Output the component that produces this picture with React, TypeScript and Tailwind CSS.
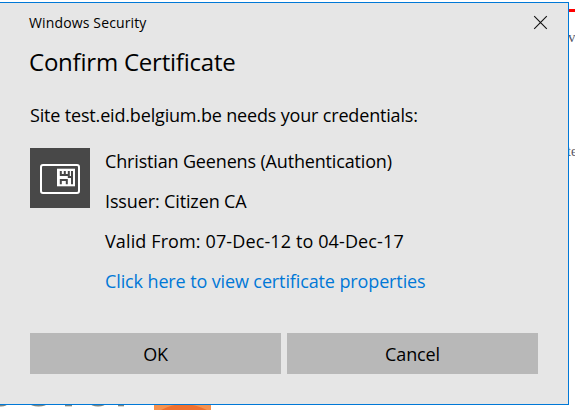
import React from 'react';

function SmartCardIcon() {
  return (
    <svg width="60" height="60" viewBox="0 0 60 60" fill="none">
      <rect x="11" y="17" width="38" height="28" rx="2" stroke="#fff" strokeWidth="2" />
      <rect x="27" y="20.7" width="18" height="17.6" fill="#fff" />
      <path
        d="M30.8 23V27H38.8V23M34.8 23V27M30.8 36.2V32H36.8V36.2M42 23V36.2M38.8 26V29H42"
        stroke="#484848"
        strokeWidth="2"
      />
    </svg>
  );
}

function BackgroundPage() {
  return (
    <div className="flex h-[410px] w-[575px] flex-col justify-between bg-white">
      <div className="flex flex-col items-end">
        <div className="mt-[9px] h-[3px] w-full bg-[#ff0000]" />
        <div className="mt-[16px] w-[7px] font-['Liberation_Serif',serif] text-[15px] leading-[18px] text-[#555566]">v</div>
        <div className="mt-[97px] w-[8px] font-['Liberation_Serif',serif] text-[14px] leading-[18px] text-[#555566]">te</div>
      </div>
      <svg className="h-[8px] w-[240px]" viewBox="0 402 240 8">
        <g fill="#7b8582">
          <ellipse cx="1" cy="403" rx="7" ry="3.6" />
          <ellipse cx="38.5" cy="403" rx="9" ry="3.6" />
          <rect x="65" y="402" width="7" height="4.3" />
          <ellipse cx="98" cy="403" rx="8" ry="3.6" />
          <rect x="118" y="402" width="6" height="4.3" />
        </g>
        <rect x="154" y="402" width="57" height="8" fill="#f6924e" />
        <path d="M161 410Q183 398 207 410Z" fill="#ef702f" />
      </svg>
    </div>
  );
}

function DialogButton({ label }: { label: string }) {
  return (
    <button className="flex h-[41px] flex-1 items-center justify-center bg-[#b8b8b8] pt-[2px] text-[18px] tracking-[-0.15px]">
      {label}
    </button>
  );
}

export default function App() {
  return (
    <div className="relative h-[410px] w-[575px] overflow-hidden">
      <BackgroundPage />
      <section className="absolute top-[2px] left-0 flex h-[403px] w-[569px] flex-col border-t border-r border-b border-[#0078d7] bg-[#e6e6e6] pr-[30px] pl-[30px] font-['Open_Sans','Noto_Sans',sans-serif] text-black">
        <header className="-mr-[10px] -ml-px flex h-[39px] items-center justify-between">
          <span className="text-[14px] tracking-[0.14px]">Windows Security</span>
          <button aria-label="Close">
            <svg width="15" height="15" viewBox="0 0 15 15" fill="none" stroke="#111" strokeWidth="1.1">
              <path d="M1.2 1.2L13.8 13.8M13.8 1.2L1.2 13.8" />
            </svg>
          </button>
        </header>
        <h1 className="-ml-px h-[40px] text-[24px] leading-[40px] tracking-[-0.22px]">Confirm Certificate</h1>
        <p className="mt-[13px] h-[40px] text-[18px] leading-[40px] tracking-[-0.17px]">Site test.eid.belgium.be needs your credentials:</p>
        <div className="mt-[6px] flex gap-[15px] text-[18px] leading-[40px]">
          <div className="mt-[7px] h-[60px] w-[60px] bg-[#484848]"><SmartCardIcon /></div>
          <div className="flex flex-col items-start">
            <span className="h-[40px] tracking-[-0.16px]">Christian Geenens (Authentication)</span>
            <span className="h-[40px] tracking-[-0.13px]">Issuer: Citizen CA</span>
            <span className="h-[40px] tracking-[0.12px]">Valid From: 07-Dec-12 to 04-Dec-17</span>
            <a className="h-[40px] tracking-[-0.12px] text-[#0078d7]">Click here to view certificate properties</a>
          </div>
        </div>
        <footer className="mt-[32px] flex gap-[6px]">
          <DialogButton label="OK" />
          <DialogButton label="Cancel" />
        </footer>
      </section>
    </div>
  );
}
